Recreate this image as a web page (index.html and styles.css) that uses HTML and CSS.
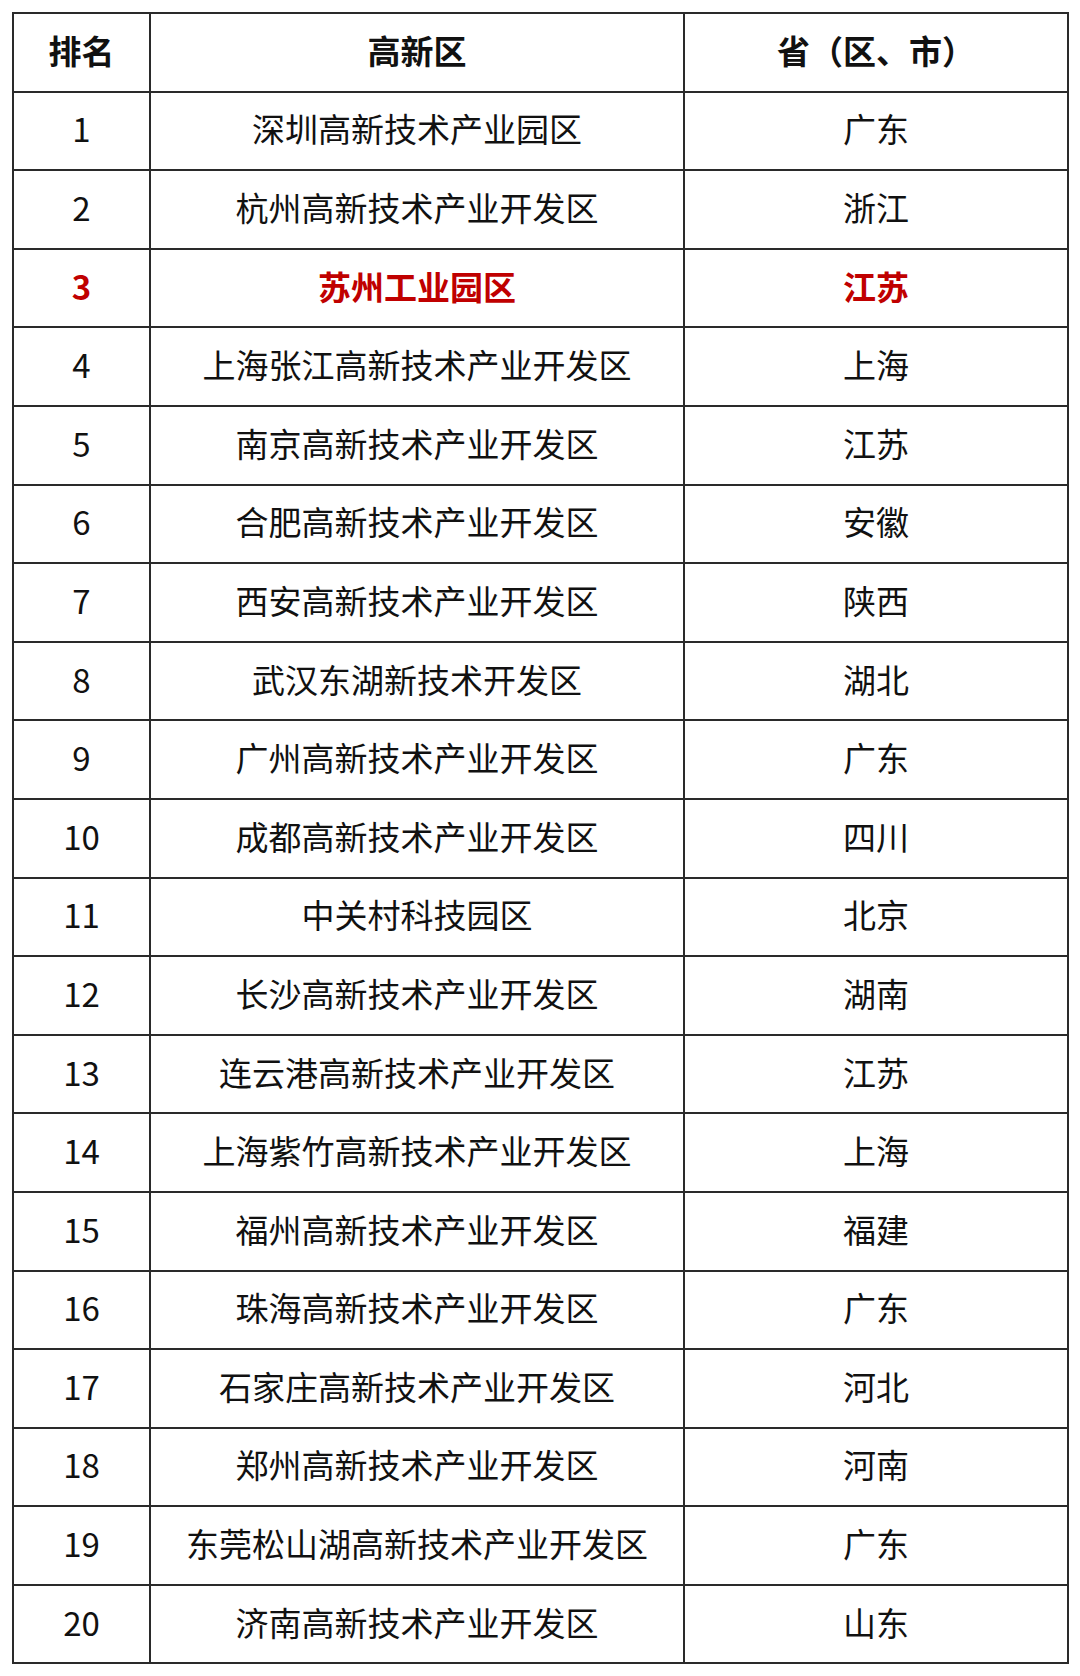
FILE: index.html
```html
<!DOCTYPE html>
<html lang="zh-CN">
<head>
<meta charset="utf-8">
<link rel="stylesheet" href="styles.css">
</head>
<body>
<table class="rank">
<colgroup><col class="c1"><col class="c2"><col class="c3"></colgroup>
<thead>
<tr><th>排名</th><th>高新区</th><th>省（区、市）</th></tr>
</thead>
<tbody>
<tr><td>1</td><td>深圳高新技术产业园区</td><td>广东</td></tr>
<tr><td>2</td><td>杭州高新技术产业开发区</td><td>浙江</td></tr>
<tr class="hl"><td>3</td><td>苏州工业园区</td><td>江苏</td></tr>
<tr><td>4</td><td>上海张江高新技术产业开发区</td><td>上海</td></tr>
<tr><td>5</td><td>南京高新技术产业开发区</td><td>江苏</td></tr>
<tr><td>6</td><td>合肥高新技术产业开发区</td><td>安徽</td></tr>
<tr><td>7</td><td>西安高新技术产业开发区</td><td>陕西</td></tr>
<tr><td>8</td><td>武汉东湖新技术开发区</td><td>湖北</td></tr>
<tr><td>9</td><td>广州高新技术产业开发区</td><td>广东</td></tr>
<tr><td>10</td><td>成都高新技术产业开发区</td><td>四川</td></tr>
<tr><td>11</td><td>中关村科技园区</td><td>北京</td></tr>
<tr><td>12</td><td>长沙高新技术产业开发区</td><td>湖南</td></tr>
<tr><td>13</td><td>连云港高新技术产业开发区</td><td>江苏</td></tr>
<tr><td>14</td><td>上海紫竹高新技术产业开发区</td><td>上海</td></tr>
<tr><td>15</td><td>福州高新技术产业开发区</td><td>福建</td></tr>
<tr><td>16</td><td>珠海高新技术产业开发区</td><td>广东</td></tr>
<tr><td>17</td><td>石家庄高新技术产业开发区</td><td>河北</td></tr>
<tr><td>18</td><td>郑州高新技术产业开发区</td><td>河南</td></tr>
<tr><td>19</td><td>东莞松山湖高新技术产业开发区</td><td>广东</td></tr>
<tr><td>20</td><td>济南高新技术产业开发区</td><td>山东</td></tr>
</tbody>
</table>
</body>
</html>
```
FILE: styles.css
```css
html, body {
  margin: 0;
  padding: 0;
  background: #ffffff;
}
body {
  padding: 12px 0 0 12px;
  font-family: "Noto Sans CJK SC", "Noto Sans", sans-serif;
  color: #111111;
}
.rank {
  border-collapse: collapse;
  table-layout: fixed;
  width: 1055px;
}
.c1 { width: 137px; }
.c2 { width: 534px; }
.c3 { width: 384px; }
.rank th,
.rank td {
  border: 2px solid #2a2a2a;
  height: 78.6px;
  padding: 0 0 4px 0;
  text-align: center;
  vertical-align: middle;
  font-size: 33px;
  line-height: 1;
  font-weight: 400;
  box-sizing: border-box;
}
.rank th {
  font-weight: 700;
}
.rank tr.hl td {
  color: #c00000;
  font-weight: 700;
}
```
